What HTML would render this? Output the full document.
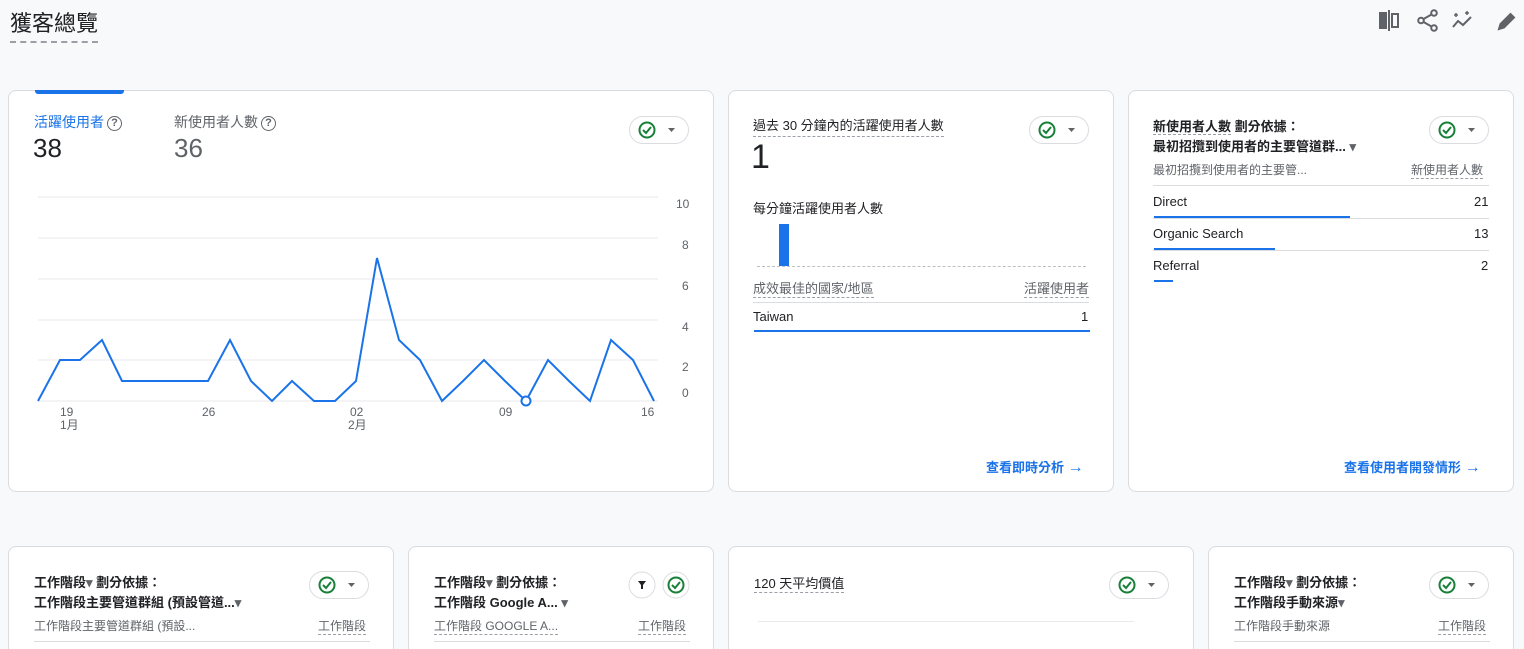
<!DOCTYPE html>
<html><head><meta charset="utf-8"><style>
*{box-sizing:border-box;margin:0;padding:0}
html,body{width:1524px;height:649px;overflow:hidden}
body{background:#f8f9fb;font-family:"Liberation Sans","Noto Sans CJK TC",sans-serif;color:#202124;position:relative}
.a{position:absolute}
.card{position:absolute;background:#fff;border:1px solid #dadce0;border-radius:8px}
.dash{border-bottom:1px dashed #9aa0a6}
.pill{position:absolute;height:28px;width:60px;border:1px solid #dadce0;border-radius:14px;background:#fff}
.t13{font-size:13px}
.g{color:#5f6368}
.b{font-weight:bold}
.link{color:#1a73e8;font-size:13px;font-weight:bold}
.q{display:inline-block;width:15px;height:15px;border:1.5px solid #5f6368;border-radius:50%;font-size:11px;line-height:12px;text-align:center;color:#5f6368;vertical-align:1px;margin-left:3px;font-weight:bold}
</style></head><body>
<div class="a" style="left:10px;top:6px;font-size:22px;padding-bottom:3px;border-bottom:2px dashed #9aa0a6">獲客總覽</div>
<svg class="a" style="left:1378px;top:8px" width="140" height="26" viewBox="0 0 140 26">
<g fill="none" stroke="#5f6368" stroke-width="2">
<rect x="2" y="5" width="6" height="15" fill="#5f6368"/><line x1="11" y1="2" x2="11" y2="23"/><rect x="14" y="6" width="6" height="13"/>
<circle cx="56" cy="5" r="2.8"/><circle cx="43" cy="12.5" r="2.8"/><circle cx="56" cy="20" r="2.8"/><line x1="45.5" y1="11" x2="53.5" y2="6.5"/><line x1="45.5" y1="14" x2="53.5" y2="18.5"/>
<polyline points="75,19 80,13 85,17 93,9"/><path d="M78 5v4M76 7h4M89 3v4M87 5h4" stroke-width="1.5"/>
<path d="M121 21l1.5-5 10-10 3.5 3.5-10 10z" fill="#5f6368"/>
</g></svg>

<div class="card" style="left:8px;top:90px;width:706px;height:402px"></div>
<div class="a" style="left:35px;top:90px;width:89px;height:4px;background:#1a73e8;border-radius:0 0 3px 3px"></div>
<div class="a" style="left:34px;top:112px;font-size:14px;color:#1a73e8">活躍使用者<span class="q">?</span></div>
<div class="a" style="left:33px;top:133px;font-size:26px">38</div>
<div class="a g" style="left:174px;top:112px;font-size:14px">新使用者人數<span class="q">?</span></div>
<div class="a g" style="left:174px;top:133px;font-size:26px">36</div>
<div class="pill" style="left:629px;top:116px"></div>
<svg class="a" width="60" height="28" style="left:629px;top:116px"><circle cx="18" cy="14" r="7.5" fill="none" stroke="#188038" stroke-width="2"/><path d="M14 14l3 3 5-6" fill="none" stroke="#188038" stroke-width="2"/><path d="M39 12h7l-3.5 4z" fill="#5f6368"/></svg>
<svg class="a" style="left:0;top:180px" width="714" height="260">
<g stroke="#e8eaed" stroke-width="1"><line x1="38" y1="17" x2="658" y2="17"/><line x1="38" y1="58" x2="658" y2="58"/><line x1="38" y1="99" x2="658" y2="99"/><line x1="38" y1="140" x2="658" y2="140"/><line x1="38" y1="180" x2="658" y2="180"/><line x1="38" y1="221" x2="658" y2="221"/></g>
<g font-size="12" fill="#5f6368" font-family="Liberation Sans"><text x="676" y="28">10</text><text x="682" y="69">8</text><text x="682" y="110">6</text><text x="682" y="151">4</text><text x="682" y="191">2</text><text x="682" y="217">0</text>
<text x="60" y="236">19</text><text x="60" y="249">1月</text><text x="202" y="236">26</text><text x="350" y="236">02</text><text x="348" y="249">2月</text><text x="499" y="236">09</text><text x="641" y="236">16</text></g>
<polyline fill="none" stroke="#1a73e8" stroke-width="2" points="38,221 60,180 80,180 102,160 122,201 143,201 165,201 186,201 208,201 230,160 251,201 272,221 292,201 314,221 335,221 356,201 377,78 399,160 420,180 442,221 463,201 484,180 505,201 526,221 548,180 569,201 590,221 611,160 633,180 654,221"/>
<circle cx="526" cy="221" r="4.5" fill="#fff" stroke="#1a73e8" stroke-width="2"/>
</svg>

<div class="card" style="left:728px;top:90px;width:386px;height:402px"></div>
<div class="a t13 dash" style="left:753px;top:115px;padding-bottom:2px">過去 30 分鐘內的活躍使用者人數</div>
<div class="a" style="left:751px;top:138px;font-size:34px">1</div>
<div class="pill" style="left:1029px;top:116px"></div>
<svg class="a" width="60" height="28" style="left:1029px;top:116px"><circle cx="18" cy="14" r="7.5" fill="none" stroke="#188038" stroke-width="2"/><path d="M14 14l3 3 5-6" fill="none" stroke="#188038" stroke-width="2"/><path d="M39 12h7l-3.5 4z" fill="#5f6368"/></svg>
<div class="a t13" style="left:753px;top:198px">每分鐘活躍使用者人數</div>
<div class="a" style="left:757px;top:266px;width:329px;border-top:1px dashed #bdc1c6"></div>
<div class="a" style="left:779px;top:224px;width:10px;height:42px;background:#1a73e8"></div>
<div class="a t13 g dash" style="left:753px;top:278px">成效最佳的國家/地區</div>
<div class="a t13 g dash" style="left:1024px;top:278px">活躍使用者</div>
<div class="a" style="left:753px;top:302px;width:336px;border-top:1px solid #dadce0"></div>
<div class="a t13" style="left:753px;top:309px">Taiwan</div>
<div class="a t13" style="left:1081px;top:309px">1</div>
<div class="a" style="left:754px;top:330px;width:336px;height:2px;background:#1a73e8"></div>
<div class="a link" style="left:986px;top:457px">查看即時分析 <span style="font-size:16px">→</span></div>

<div class="card" style="left:1128px;top:90px;width:386px;height:402px"></div>
<div class="a t13 b" style="left:1153px;top:116px"><span class="dash">新使用者人數</span> 劃分依據：</div>
<div class="a t13 b" style="left:1153px;top:136px">最初招攬到使用者的主要管道群... <span style="color:#5f6368">▾</span></div>
<div class="pill" style="left:1429px;top:116px"></div>
<svg class="a" width="60" height="28" style="left:1429px;top:116px"><circle cx="18" cy="14" r="7.5" fill="none" stroke="#188038" stroke-width="2"/><path d="M14 14l3 3 5-6" fill="none" stroke="#188038" stroke-width="2"/><path d="M39 12h7l-3.5 4z" fill="#5f6368"/></svg>
<div class="a g" style="left:1153px;top:161px;font-size:12px">最初招攬到使用者的主要管...</div>
<div class="a g dash" style="left:1411px;top:161px;font-size:12px">新使用者人數</div>
<div class="a" style="left:1153px;top:185px;width:336px;border-top:1px solid #dadce0"></div>
<div class="a t13" style="left:1153px;top:194px">Direct</div><div class="a t13" style="left:1474px;top:194px">21</div>
<div class="a" style="left:1154px;top:216px;width:196px;height:2px;background:#1a73e8"></div>
<div class="a" style="left:1153px;top:218px;width:336px;border-top:1px solid #dadce0"></div>
<div class="a t13" style="left:1153px;top:226px">Organic Search</div><div class="a t13" style="left:1474px;top:226px">13</div>
<div class="a" style="left:1154px;top:248px;width:121px;height:2px;background:#1a73e8"></div>
<div class="a" style="left:1153px;top:250px;width:336px;border-top:1px solid #dadce0"></div>
<div class="a t13" style="left:1153px;top:258px">Referral</div><div class="a t13" style="left:1481px;top:258px">2</div>
<div class="a" style="left:1154px;top:280px;width:19px;height:2px;background:#1a73e8"></div>
<div class="a link" style="left:1344px;top:457px">查看使用者開發情形 <span style="font-size:16px">→</span></div>

<div class="card" style="left:8px;top:546px;width:386px;height:120px"></div>
<div class="a t13 b" style="left:34px;top:572px">工作階段<span class="g">▾</span> 劃分依據：</div>
<div class="a t13 b" style="left:34px;top:592px">工作階段主要管道群組 (預設管道...<span class="g">▾</span></div>
<div class="pill" style="left:309px;top:571px"></div>
<svg class="a" width="60" height="28" style="left:309px;top:571px"><circle cx="18" cy="14" r="7.5" fill="none" stroke="#188038" stroke-width="2"/><path d="M14 14l3 3 5-6" fill="none" stroke="#188038" stroke-width="2"/><path d="M39 12h7l-3.5 4z" fill="#5f6368"/></svg>
<div class="a g" style="left:34px;top:617px;font-size:12px">工作階段主要管道群組 (預設...</div>
<div class="a g dash" style="left:318px;top:617px;font-size:12px">工作階段</div>
<div class="a" style="left:34px;top:641px;width:336px;border-top:1px solid #dadce0"></div>

<div class="card" style="left:408px;top:546px;width:306px;height:120px"></div>
<div class="a t13 b" style="left:434px;top:572px">工作階段<span class="g">▾</span> 劃分依據：</div>
<div class="a t13 b" style="left:434px;top:592px">工作階段 Google A... <span class="g">▾</span></div>
<svg class="a" width="64" height="30" style="left:628px;top:571px"><circle cx="14" cy="14" r="13" fill="#fff" stroke="#dadce0"/><path d="M10 10h8l-3 4v4h-2v-4z" fill="#202124"/><circle cx="48" cy="14" r="13" fill="#fff" stroke="#dadce0"/><circle cx="48" cy="14" r="7.5" fill="none" stroke="#188038" stroke-width="2"/><path d="M44 14l3 3 5-6" fill="none" stroke="#188038" stroke-width="2"/></svg>
<div class="a g dash" style="left:434px;top:617px;font-size:12px">工作階段 GOOGLE A...</div>
<div class="a g dash" style="left:638px;top:617px;font-size:12px">工作階段</div>
<div class="a" style="left:434px;top:641px;width:256px;border-top:1px solid #dadce0"></div>

<div class="card" style="left:728px;top:546px;width:466px;height:120px"></div>
<div class="a t13 dash" style="left:754px;top:573px">120 天平均價值</div>
<div class="pill" style="left:1109px;top:571px"></div>
<svg class="a" width="60" height="28" style="left:1109px;top:571px"><circle cx="18" cy="14" r="7.5" fill="none" stroke="#188038" stroke-width="2"/><path d="M14 14l3 3 5-6" fill="none" stroke="#188038" stroke-width="2"/><path d="M39 12h7l-3.5 4z" fill="#5f6368"/></svg>
<div class="a" style="left:758px;top:621px;width:376px;border-top:1px solid #e8eaed"></div>

<div class="card" style="left:1208px;top:546px;width:306px;height:120px"></div>
<div class="a t13 b" style="left:1234px;top:572px">工作階段<span class="g">▾</span> 劃分依據：</div>
<div class="a t13 b" style="left:1234px;top:592px">工作階段手動來源<span class="g">▾</span></div>
<div class="pill" style="left:1429px;top:571px"></div>
<svg class="a" width="60" height="28" style="left:1429px;top:571px"><circle cx="18" cy="14" r="7.5" fill="none" stroke="#188038" stroke-width="2"/><path d="M14 14l3 3 5-6" fill="none" stroke="#188038" stroke-width="2"/><path d="M39 12h7l-3.5 4z" fill="#5f6368"/></svg>
<div class="a g" style="left:1234px;top:617px;font-size:12px">工作階段手動來源</div>
<div class="a g dash" style="left:1438px;top:617px;font-size:12px">工作階段</div>
<div class="a" style="left:1234px;top:641px;width:256px;border-top:1px solid #dadce0"></div>
</body></html>
